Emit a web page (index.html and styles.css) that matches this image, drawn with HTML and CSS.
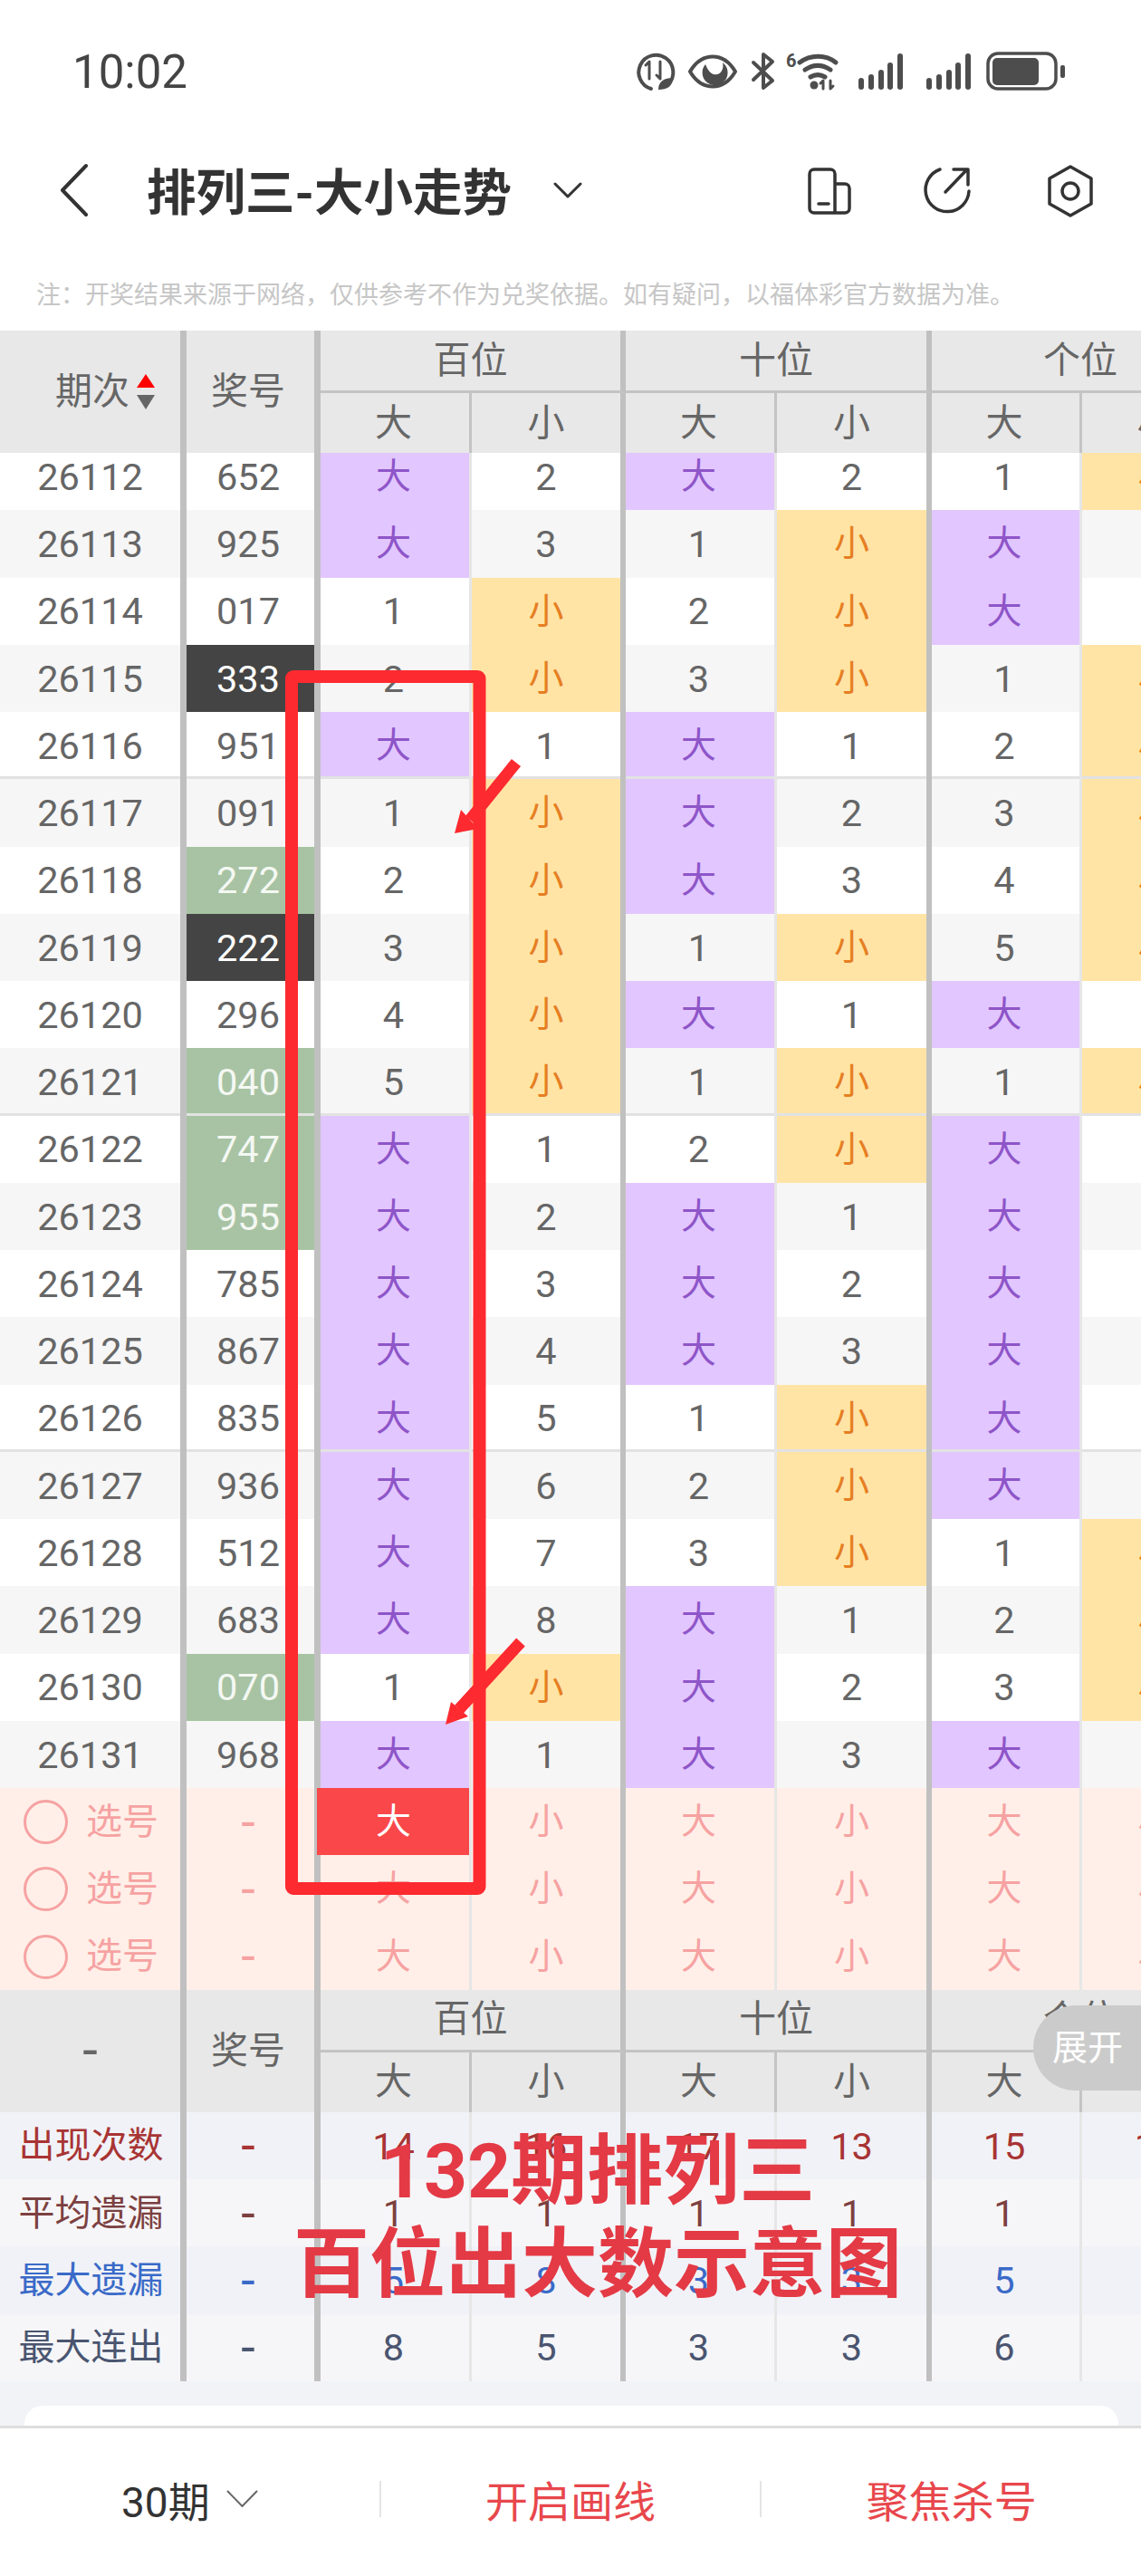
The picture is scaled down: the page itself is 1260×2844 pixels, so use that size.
FILE: index.html
```html
<!DOCTYPE html>
<html lang="zh-CN">
<head>
    <meta charset="UTF-8">
    <meta name="viewport" content="width=device-width, initial-scale=1.0">
    <title>排列三-大小走势</title>
    <link rel="stylesheet" href="styles.css">
</head>
<body>
<div class="page">
    <div class="status">
        <span class="time">10:02</span>
        <svg class="status-icons" width="480" height="46" viewBox="700 55 480 46">
            <!-- data saver -->
            <path d="M738 92A19 19 0 1 0 719 97" class="ln"/>
            <path d="M717 67l-4 4M717 67v19M729 67v19M729 86l-4-4" class="ln thin"/>
            <path d="M727 98c0-9 6-13 16-13 0 9-6 13-16 13z" class="fl"/>
            <!-- eye -->
            <path d="M762 78c13-22 37-22 50 0-13 22-37 22-50 0z" class="ln"/>
            <path d="M779 70a14 14 0 1 0 19-2c2 8-3 15-10 13-4-1-7-6-9-11z" class="fl"/>
            <!-- bluetooth -->
            <path d="M832 68l21 20-10 8V59l10 8-21 20" class="ln"/>
            <!-- wifi -->
            <text x="868" y="73" class="six">6</text>
            <path d="M883 68c12-9 29-9 40 0M889 76c9-6 19-6 28 0M895 84c5-3 11-3 16 0" class="ln wifi"/>
            <circle cx="899" cy="93" r="4.5" class="fl"/>
            <path d="M909 97v-9l-3 3M917 88v9l3-3" class="ln thin"/>
            <!-- signal -->
            <rect x="948" y="85" width="6" height="13" rx="3" class="fl"/>
            <rect x="959" y="81" width="6" height="17" rx="3" class="fl"/>
            <rect x="970" y="76" width="6" height="22" rx="3" class="fl"/>
            <rect x="980" y="68" width="6" height="30" rx="3" class="fl"/>
            <rect x="991" y="58" width="6" height="40" rx="3" class="fl"/>
            <rect x="1023" y="85" width="6" height="13" rx="3" class="fl"/>
            <rect x="1034" y="81" width="6" height="17" rx="3" class="fl"/>
            <rect x="1045" y="76" width="6" height="22" rx="3" class="fl"/>
            <rect x="1055" y="68" width="6" height="30" rx="3" class="fl"/>
            <rect x="1066" y="58" width="6" height="40" rx="3" class="fl"/>
            <!-- battery -->
            <rect x="1091" y="58" width="75" height="39" rx="11" class="ln bat"/>
            <rect x="1096" y="63" width="51" height="30" rx="5" class="fl"/>
            <rect x="1171" y="71" width="5" height="14" rx="2" class="fl"/>
        </svg>
    </div>

    <div class="nav">
        <svg class="back" width="30" height="60" viewBox="0 0 30 60"><path d="M28 3L2 30l26 27"/></svg>
        <h1 class="title">排列三-大小走势</h1>
        <svg class="drop" width="32" height="18" viewBox="0 0 32 18"><path d="M2 2l14 14L30 2"/></svg>
        <div class="nav-icons">
            <svg width="52" height="52" viewBox="0 0 52 52">
                <path d="M10 2h18a5 5 0 0 1 5 5v43H10a5 5 0 0 1-5-5V7a5 5 0 0 1 5-5zM33 18h11a5 5 0 0 1 5 5v22a5 5 0 0 1-5 5H33M15 40h11"/>
            </svg>
            <svg width="56" height="56" viewBox="0 0 56 56">
                <path d="M22 4a24 24 0 1 0 32 24M28 29L52 4M37 4h16v17"/>
            </svg>
            <svg class="hex" width="52" height="58" viewBox="0 0 52 58">
                <path d="M26 2l23 13v28L26 56 3 43V15z"/><circle cx="26" cy="29" r="9"/>
            </svg>
        </div>
    </div>

    <p class="note">注：开奖结果来源于网络，仅供参考不作为兑奖依据。如有疑问，以福体彩官方数据为准。</p>

    <div class="head">
        <div class="span2 sort-cell"><span>期次</span>
            <span class="sort"><i class="up"></i><i class="down"></i></span>
        </div>
        <div class="span2 prize">奖号</div>
        <div class="group">百位</div><div class="group">十位</div><div class="group">个位</div>
        <div>大</div><div>小</div><div>大</div><div>小</div><div>大</div><div>小</div>
    </div>

    <div class="rows">
        <div class="row"><span>26112</span><span>652</span><span class="da">大</span><span>2</span><span class="da">大</span><span>2</span><span>1</span><span class="xiao">小</span></div>
        <div class="row alt"><span>26113</span><span>925</span><span class="da">大</span><span>3</span><span>1</span><span class="xiao">小</span><span class="da">大</span><span>1</span></div>
        <div class="row"><span>26114</span><span>017</span><span>1</span><span class="xiao">小</span><span>2</span><span class="xiao">小</span><span class="da">大</span><span>2</span></div>
        <div class="row alt"><span>26115</span><span class="leopard">333</span><span>2</span><span class="xiao">小</span><span>3</span><span class="xiao">小</span><span>1</span><span class="xiao">小</span></div>
        <div class="row end"><span>26116</span><span>951</span><span class="da">大</span><span>1</span><span class="da">大</span><span>1</span><span>2</span><span class="xiao">小</span></div>
        <div class="row alt"><span>26117</span><span>091</span><span>1</span><span class="xiao">小</span><span class="da">大</span><span>2</span><span>3</span><span class="xiao">小</span></div>
        <div class="row"><span>26118</span><span class="pair">272</span><span>2</span><span class="xiao">小</span><span class="da">大</span><span>3</span><span>4</span><span class="xiao">小</span></div>
        <div class="row alt"><span>26119</span><span class="leopard">222</span><span>3</span><span class="xiao">小</span><span>1</span><span class="xiao">小</span><span>5</span><span class="xiao">小</span></div>
        <div class="row"><span>26120</span><span>296</span><span>4</span><span class="xiao">小</span><span class="da">大</span><span>1</span><span class="da">大</span><span>1</span></div>
        <div class="row alt end"><span>26121</span><span class="pair">040</span><span>5</span><span class="xiao">小</span><span>1</span><span class="xiao">小</span><span>1</span><span class="xiao">小</span></div>
        <div class="row"><span>26122</span><span class="pair">747</span><span class="da">大</span><span>1</span><span>2</span><span class="xiao">小</span><span class="da">大</span><span>1</span></div>
        <div class="row alt"><span>26123</span><span class="pair">955</span><span class="da">大</span><span>2</span><span class="da">大</span><span>1</span><span class="da">大</span><span>2</span></div>
        <div class="row"><span>26124</span><span>785</span><span class="da">大</span><span>3</span><span class="da">大</span><span>2</span><span class="da">大</span><span>3</span></div>
        <div class="row alt"><span>26125</span><span>867</span><span class="da">大</span><span>4</span><span class="da">大</span><span>3</span><span class="da">大</span><span>4</span></div>
        <div class="row end"><span>26126</span><span>835</span><span class="da">大</span><span>5</span><span>1</span><span class="xiao">小</span><span class="da">大</span><span>5</span></div>
        <div class="row alt"><span>26127</span><span>936</span><span class="da">大</span><span>6</span><span>2</span><span class="xiao">小</span><span class="da">大</span><span>6</span></div>
        <div class="row"><span>26128</span><span>512</span><span class="da">大</span><span>7</span><span>3</span><span class="xiao">小</span><span>1</span><span class="xiao">小</span></div>
        <div class="row alt"><span>26129</span><span>683</span><span class="da">大</span><span>8</span><span class="da">大</span><span>1</span><span>2</span><span class="xiao">小</span></div>
        <div class="row"><span>26130</span><span class="pair">070</span><span>1</span><span class="xiao">小</span><span class="da">大</span><span>2</span><span>3</span><span class="xiao">小</span></div>
        <div class="row alt"><span>26131</span><span>968</span><span class="da">大</span><span>1</span><span class="da">大</span><span>3</span><span class="da">大</span><span>1</span></div>

        <div class="row pick"><span class="choose"><i></i>选号</span><span class="dash">-</span><span class="picked">大</span><span>小</span><span>大</span><span>小</span><span>大</span><span>小</span></div>
        <div class="row pick"><span class="choose"><i></i>选号</span><span class="dash">-</span><span>大</span><span>小</span><span>大</span><span>小</span><span>大</span><span>小</span></div>
        <div class="row pick"><span class="choose"><i></i>选号</span><span class="dash">-</span><span>大</span><span>小</span><span>大</span><span>小</span><span>大</span><span>小</span></div>
    </div>

    <div class="head">
        <div class="span2 head-dash">-</div>
        <div class="span2 prize">奖号</div>
        <div class="group">百位</div><div class="group">十位</div><div class="group">个位</div>
        <div>大</div><div>小</div><div>大</div><div>小</div><div>大</div><div>小</div>
    </div>

    <div class="row stat times"><span>出现次数</span><span class="dash">-</span><span>14</span><span>16</span><span>17</span><span>13</span><span>15</span><span>15</span></div>
    <div class="row stat avg"><span>平均遗漏</span><span class="dash">-</span><span>1</span><span>1</span><span>1</span><span>1</span><span>1</span><span>1</span></div>
    <div class="row stat miss"><span>最大遗漏</span><span class="dash">-</span><span>5</span><span>8</span><span>3</span><span>3</span><span>5</span><span>5</span></div>
    <div class="row stat lian"><span>最大连出</span><span class="dash">-</span><span>8</span><span>5</span><span>3</span><span>3</span><span>6</span><span>4</span></div>

    <div class="tail"><div class="tail-card"></div></div>

    <div class="bar">
        <div class="bar-item period">30期
            <svg width="35" height="19" viewBox="0 0 35 19"><path d="M1 1l16.5 17L34 1"/></svg>
        </div>
        <div class="bar-item red">开启画线</div>
        <div class="bar-item red">聚焦杀号</div>
    </div>

    <!-- marks drawn on top of the screenshot -->
    <svg class="marks" width="1260" height="2844" viewBox="0 0 1260 2844">
        <rect x="322" y="747" width="207.5" height="1338" rx="2"/>
        <path d="M570 842L519 905" class="shaft"/>
        <polygon points="502,920 509,894 528,915"/>
        <path d="M575 1813L507 1887" class="shaft"/>
        <polygon points="492,1904 498,1879 517,1895"/>
    </svg>
    <div class="caption">132期排列三<br>百位出大数示意图</div>
    <div class="expand">展开</div>
</div>
</body>
</html>
```

FILE: styles.css
```css
* {
    box-sizing: border-box;
}
body {
    margin: 0;
    font-family: Roboto, "Noto Sans CJK SC", sans-serif;
    background: #fff;
}
.page {
    position: relative;
    display: flex;
    flex-direction: column;
    width: 1260px;
    height: 2844px;
    overflow: hidden;
}

/* status bar */
.status {
    display: flex;
    align-items: center;
    justify-content: space-between;
    flex: none;
    height: 158px;
    padding: 0 80px;
}
.time {
    font-size: 51px;
    color: #444;
}
.status-icons .ln {
    fill: none;
    stroke: #4d4d4d;
    stroke-width: 4;
    stroke-linecap: round;
    stroke-linejoin: round;
}
.status-icons .thin {
    stroke-width: 3;
}
.status-icons .wifi {
    stroke-width: 5;
}
.status-icons .bat {
    stroke-width: 3.5;
}
.status-icons .fl {
    fill: #4d4d4d;
}
.status-icons .six {
    font-size: 20px;
    font-weight: 700;
    fill: #4d4d4d;
}

/* nav */
.nav {
    display: flex;
    align-items: center;
    flex: none;
    height: 104px;
    padding-left: 67px;
}
.nav svg {
    fill: none;
    stroke: #333;
    stroke-linecap: round;
    stroke-linejoin: round;
}
.nav .back {
    stroke-width: 4;
}
.title {
    margin: 6px 0 0 65px;
    font-size: 54.5px;
    font-weight: 700;
    line-height: 1;
    color: #333;
}
.nav .drop {
    margin-left: 46px;
    stroke-width: 3;
}
.nav-icons {
    display: flex;
    align-items: center;
    gap: 75px;
    margin-left: auto;
    padding: 2px 52px 0 0;
}
.nav-icons svg {
    stroke-width: 3.5;
}
.nav-icons .hex {
    margin-left: 9px;
}
.note {
    flex: none;
    height: 103px;
    margin: 0;
    padding: 51px 0 0 40px;
    font-size: 27px;
    line-height: 27px;
    color: #c6c6c6;
}

/* table */
.head, .row {
    display: grid;
    flex: none;
    grid-template-columns: 206px 148px 167px 170px 167px 171px 166px 168px;
}
.head {
    position: relative;
    z-index: 1;
    grid-template-rows: 69px 66px;
    background: #e8e8e8;
    font-size: 41px;
    color: #666;
}
.head > div {
    display: flex;
    align-items: center;
    justify-content: center;
    line-height: 1;
    border-right: 3px solid #c4c4c4;
}
.head > .span2 {
    grid-row: span 2;
    border-right: 7px solid #c0c0c0;
}
.head > .prize {
    padding-right: 5px;
}
.head > .head-dash {
    font-size: 60px;
}
.head > .group {
    grid-column: span 2;
    border-right: 6px solid #c0c0c0;
    border-bottom: 3px solid #c4c4c4;
}
.head > div:nth-child(6), .head > div:nth-child(8), .head > div:nth-child(10) {
    padding-right: 3px;
}
.head > div:nth-child(7), .head > div:nth-child(9), .head > div:nth-child(11) {
    border-right: 6px solid #c0c0c0;
}
.head > .sort-cell {
    justify-content: flex-start;
    gap: 8px;
    padding-left: 61px;
}
.sort i {
    display: block;
    width: 0;
    height: 0;
    border-left: 10px solid transparent;
    border-right: 10px solid transparent;
}
.sort .up {
    margin-bottom: 8px;
    border-bottom: 15px solid #f00;
}
.sort .down {
    border-top: 16px solid #666;
}

.rows {
    flex: none;
    margin-top: -11px;
}
.row {
    height: 74.25px;
    background: #fff;
    font-size: 41.5px;
    color: #666;
}
.row.alt {
    background: #f6f6f6;
}
.row > span {
    display: flex;
    align-items: center;
    justify-content: center;
    padding-top: 1px;
    line-height: 1;
    border-right: 3px solid #e6e6e6;
}
.row > span:nth-child(1), .row > span:nth-child(2) {
    border-right: 7px solid #c0c0c0;
}
.row > span:nth-child(2) {
    padding-right: 5px;
}
.row > span:nth-child(3), .row > span:nth-child(5), .row > span:nth-child(7) {
    padding-right: 3px;
}
.row > span:nth-child(4), .row > span:nth-child(6), .row > span:nth-child(8) {
    border-right: 6px solid #c0c0c0;
}
.row.end > span {
    box-shadow: inset 0 -3px 0 #e2e2e2;
}
.row .da {
    background: #e2c6ff;
    font-size: 39px;
    color: #8e55c8;
}
.row .xiao {
    background: #ffe4a6;
    font-size: 39px;
    color: #e67e22;
}
.row .leopard {
    background: #444;
    color: #fff;
}
.row .pair {
    background: #a8c3a3;
    color: #f4f8f3;
}
.row .dash {
    font-size: 56px;
}

/* pick rows */
.row.pick {
    background: #ffefe8;
    font-size: 39px;
    color: #f6a2a2;
}
.row .choose {
    gap: 20px;
    justify-content: flex-start;
    padding-left: 26px;
    font-size: 40px;
}
.choose i {
    width: 49px;
    height: 49px;
    border: 3px solid #f6a2a2;
    border-radius: 50%;
}
.row .picked {
    margin-left: -4px;
    padding-left: 4px;
    background: #fa474a;
    color: #fff;
}

/* stats */
.row.times, .row.miss {
    background: #f1f2f7;
}
.row.avg, .row.lian {
    background: #f6f6f8;
}
.row.stat > span:first-child {
    padding-left: 2px;
    font-size: 40px;
}
.row.times {
    color: #a83434;
}
.row.avg {
    color: #7c4040;
}
.row.miss {
    color: #3a6ac8;
}
.row.lian {
    color: #4a5570;
}
.tail {
    flex: 1;
    padding: 27px 25px 0 27px;
    background: #f2f3f7;
}
.tail-card {
    height: 100%;
    background: #fff;
    border-radius: 20px 20px 0 0;
}

/* bottom bar */
.bar {
    display: flex;
    align-items: center;
    flex: none;
    height: 166px;
    padding-bottom: 8px;
    background: #fff;
    border-top: 3px solid #ddd;
}
.bar-item {
    display: flex;
    align-items: center;
    justify-content: center;
    gap: 18px;
    flex: 1;
    height: 40px;
    font-size: 47px;
    color: #333;
}
.bar-item + .bar-item {
    border-left: 2px solid #e4e4e4;
}
.bar-item.period {
    font-size: 46px;
}
.bar-item.red {
    color: #e8474c;
}
.period svg {
    fill: none;
    stroke: #666;
    stroke-width: 2;
}

/* overlays */
.marks {
    position: absolute;
    top: 0;
    left: 0;
    z-index: 2;
}
.marks rect {
    fill: none;
    stroke: #fd2a30;
    stroke-width: 14;
}
.marks polygon {
    fill: #fd2a30;
}
.marks .shaft {
    fill: none;
    stroke: #fd2a30;
    stroke-width: 13;
}
.caption {
    position: absolute;
    top: 2346px;
    left: 260px;
    z-index: 3;
    width: 800px;
    font-size: 84px;
    font-weight: 700;
    line-height: 103px;
    text-align: center;
    color: #e33a45;
}
.expand {
    position: absolute;
    top: 2214px;
    right: 0;
    z-index: 3;
    width: 119px;
    height: 94px;
    padding-left: 21px;
    background: #cbcbcb;
    border-radius: 47px 0 0 47px;
    font-size: 39px;
    line-height: 94px;
    color: #fff;
}
```
